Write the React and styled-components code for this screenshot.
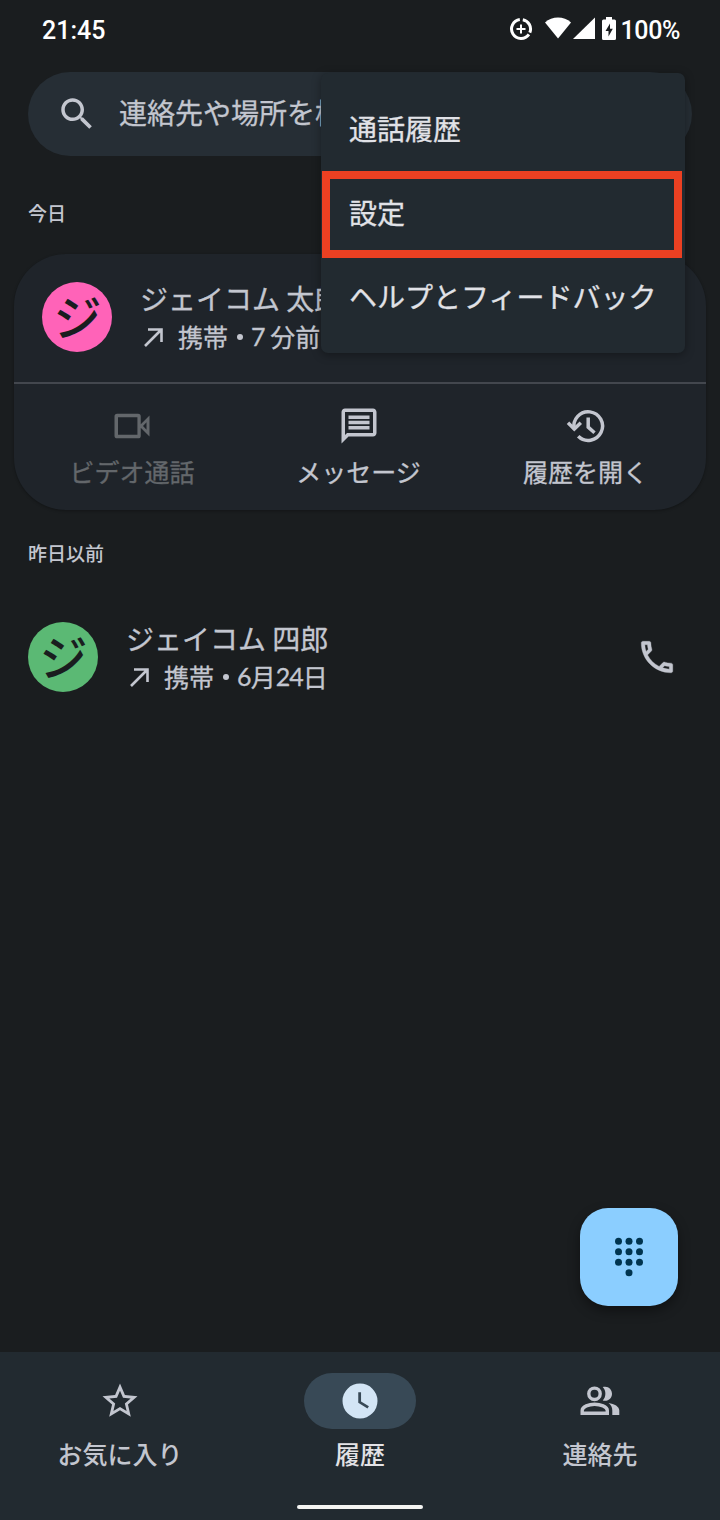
import React from 'react'
import styled, { createGlobalStyle } from 'styled-components'

const GlobalStyle = createGlobalStyle`
  * {
    box-sizing: border-box;
  }
  body {
    margin: 0;
    background: #1a1d1f;
  }
`

const Screen = styled.div`
  position: relative;
  display: flex;
  flex-direction: column;
  width: 720px;
  height: 1520px;
  overflow: hidden;
  background: #1a1d1f;
  color: #c3c6cf;
  font-family: 'Noto Sans CJK JP', 'Noto Sans', sans-serif;
  -webkit-text-stroke: 0.3px currentColor;
  white-space: nowrap;
`

const StatusBar = styled.header`
  display: flex;
  align-items: center;
  justify-content: space-between;
  height: 72px;
  padding: 0 40px 12px 42px;
  color: #fff;
  font-family: Roboto, sans-serif;
  font-size: 25px;
  font-weight: 500;
  -webkit-text-stroke: 0;
`

const StatusIcons = styled.div`
  display: flex;
  align-items: center;
  svg {
    display: block;
    margin-bottom: 2px;
  }
`

const Percent = styled.span`
  letter-spacing: -0.4px;
`

const SearchBar = styled.div`
  display: flex;
  align-items: center;
  gap: 21px;
  height: 84px;
  margin: 0 28px;
  padding: 0 28px;
  border-radius: 42px;
  background: #262e35;
  font-size: 28px;
  line-height: 40px;
  span {
    padding-bottom: 5px;
  }
`

const SectionTitle = styled.h2`
  margin: 0;
  padding-left: 28px;
  height: ${({ $height }) => $height}px;
  line-height: ${({ $line }) => $line}px;
  font-size: 19px;
  font-weight: 500;
  -webkit-text-stroke: 0;
`

const Card = styled.section`
  height: 256px;
  margin: 0 14px;
  border-radius: 52px;
  background: #1f242a;
  box-shadow: 0 1px 3px rgba(0, 0, 0, 0.3);
`

const CallRow = styled.div`
  display: flex;
  align-items: center;
  height: 128px;
  padding: 0 42px 2px 28px;
`

const Avatar = styled.div`
  flex: none;
  width: 70px;
  height: 70px;
  margin-right: 28px;
  padding-left: 1px;
  border-radius: 50%;
  background: ${({ $color }) => $color};
  color: #1a1d1f;
  font-size: 48px;
  font-weight: 500;
  line-height: 66px;
  text-align: center;
  -webkit-text-stroke: 0;
`

const CallInfo = styled.div`
  flex: 1;
`

const Name = styled.div`
  font-size: 28px;
  line-height: 38px;
`

const Detail = styled.div`
  display: flex;
  align-items: center;
  height: 38px;
  font-size: 25px;
  line-height: 36px;
  svg {
    margin: 0 11px 0 1px;
  }
`

const Dot = styled.i`
  width: 6px;
  height: 6px;
  margin: 2px 8px 0 9px;
  border-radius: 50%;
  background: currentColor;
`

const Digits = styled.span`
  font-family: Lato, sans-serif;
  letter-spacing: -0.9px;
`

const Actions = styled.div`
  display: grid;
  grid-template-columns: 236px 217px 237px;
  border-top: 2px solid #43474e;
  padding-top: 21px;
`

const Action = styled.div`
  display: flex;
  flex-direction: column;
  align-items: center;
  font-size: 25px;
  line-height: 36px;
  color: ${({ $disabled }) => ($disabled ? '#63676b' : '#c3c6cf')};
  svg {
    margin-bottom: 6px;
  }
`

const Menu = styled.div`
  position: absolute;
  top: 73px;
  left: 321px;
  width: 364px;
  padding: 14px 0;
  border-radius: 7px;
  background: #222a30;
  box-shadow: 0 2px 10px rgba(0, 0, 0, 0.35);
`

const MenuItem = styled.div`
  position: relative;
  height: 84px;
  padding-left: 28px;
  color: #e1e2e7;
  font-size: 28px;
  line-height: 83px;
`

const Highlight = styled.span`
  position: absolute;
  top: 0;
  left: 1px;
  width: 360px;
  height: 87px;
  border: 8px solid #eb4022;
`

const Fab = styled.button`
  position: absolute;
  top: 1208px;
  right: 42px;
  display: flex;
  align-items: center;
  justify-content: center;
  width: 98px;
  height: 98px;
  padding: 0;
  border: 0;
  border-radius: 28px;
  background: #8bceff;
  box-shadow: 0 5px 12px rgba(0, 0, 0, 0.4);
`

const BottomNav = styled.nav`
  display: grid;
  grid-template-columns: repeat(3, 240px);
  align-content: start;
  height: 168px;
  margin-top: auto;
  padding-top: 21px;
  background: #222a30;
`

const NavItem = styled.div`
  display: flex;
  flex-direction: column;
  align-items: center;
  color: ${({ $active }) => ($active ? '#e3e2e6' : '#c3c6cf')};
  font-size: 25px;
  font-weight: 500;
  line-height: 36px;
  -webkit-text-stroke: 0;
`

const Pill = styled.div`
  display: flex;
  align-items: center;
  justify-content: center;
  width: 112px;
  height: 56px;
  margin-bottom: 6px;
  border-radius: 28px;
  background: ${({ $active }) => ($active ? '#384956' : 'transparent')};
  color: ${({ $active }) => ($active ? '#d3e5f5' : '#c3c6cf')};
`

const HomeBar = styled.div`
  grid-column: 2;
  justify-self: center;
  width: 126px;
  height: 4px;
  margin-top: 34px;
  border-radius: 2px;
  background: #f4f4f2;
`

const Icon = ({ size = 42, children }) => (
  <svg width={size} height={size} viewBox="0 0 24 24" fill="currentColor">
    {children}
  </svg>
)

const OutgoingIcon = () => (
  <svg width="26" height="26" viewBox="0 0 26 26" fill="none" stroke="currentColor" strokeWidth="2.6">
    <path d="M4 23 20 7M7 6.500H20.500V19" />
  </svg>
)

const HistoryIcon = () => (
  <svg width="42" height="42" viewBox="0 0 42 42" fill="none" stroke="currentColor" strokeWidth="3.500">
    <path d="M9.200 24A14.300 14.300 0 1 1 13.200 31.300" />
    <path d="M3 17.800 9.300 24.100 15.800 17.800" />
    <path d="M23.200 12.500V22.100L29.500 27.700" />
  </svg>
)

const DataSaverIcon = () => (
  <svg width="24" height="24" viewBox="0 0 24 24" fill="none" stroke="currentColor">
    <path d="M10.800 2.600A9.500 9.500 0 1 0 19.900 17.400" strokeWidth="3" />
    <path d="M13.800 2.700A9.500 9.500 0 0 1 20.800 15.700" strokeWidth="3" />
    <path d="M12 7.500v9M7.500 12h9" strokeWidth="2" />
  </svg>
)

export default () => {
  return (
    <>
      <GlobalStyle />
      <Screen>
        <StatusBar>
          <span>21:45</span>
          <StatusIcons>
            <DataSaverIcon />
            <svg width="88" height="26" viewBox="0 0 88 26" fill="#fff">
              <path d="M12 6.500C19-.2 31-.2 38 6.500L25 22.500Z" />
              <path d="M62 1.500V23H40Z" />
              <path
                fillRule="evenodd"
                d="M73 1h6v2.500h2.500Q83 3.500 83 5V22.500Q83 24 81.500 24H70.500Q69 24 69 22.500V5Q69 3.500 70.500 3.500H73ZM77 7.500 72.500 15H75.500V20.500L79.800 12.800H77Z"
              />
            </svg>
            <Percent>100%</Percent>
          </StatusIcons>
        </StatusBar>

        <SearchBar>
          <Icon>
            <path d="M15.500 14h-.79l-.28-.27C15.410 12.590 16 11.110 16 9.500 16 5.910 13.090 3 9.500 3S3 5.910 3 9.500 5.910 16 9.500 16c1.610 0 3.090-.59 4.230-1.570l.27.28v.79l5 4.990L20.490 19l-4.990-5zm-6 0C7.010 14 5 11.990 5 9.500S7.010 5 9.500 5 14 7.010 14 9.500 11.990 14 9.500 14z" />
          </Icon>
          <span>連絡先や場所を検</span>
        </SearchBar>

        <SectionTitle $height={98} $line={113}>今日</SectionTitle>
        <Card>
          <CallRow>
            <Avatar $color="#ff63b8">ジ</Avatar>
            <CallInfo>
              <Name>ジェイコム 太郎</Name>
              <Detail>
                <OutgoingIcon />
                携帯<Dot /><Digits>7</Digits>&nbsp;分前
              </Detail>
            </CallInfo>
          </CallRow>
          <Actions>
            <Action $disabled>
              <Icon>
                <path
                  fillRule="evenodd"
                  d="M3.500 5h12a1.500 1.500 0 0 1 1.500 1.500V11l5-5v12l-5-5v4.500a1.500 1.500 0 0 1-1.500 1.500h-12A1.500 1.500 0 0 1 2 17.500v-11A1.500 1.500 0 0 1 3.500 5zm.5 2v10h11.100V7zM20.300 9.800 18.300 12l2 2.200z"
                />
              </Icon>
              ビデオ通話
            </Action>
            <Action>
              <Icon>
                <path d="M4 4h16v12H5.170L4 17.170V4m0-2c-1.100 0-1.990.9-1.990 2L2 22l4-4h14c1.100 0 2-.9 2-2V4c0-1.100-.9-2-2-2H4zm2 10h12v2H6v-2zm0-3h12v2H6V9zm0-3h12v2H6V6z" />
              </Icon>
              メッセージ
            </Action>
            <Action>
              <HistoryIcon />
              履歴を開く
            </Action>
          </Actions>
        </Card>

        <SectionTitle $height={84} $line={85}>昨日以前</SectionTitle>
        <CallRow>
          <Avatar $color="#5bb974">ジ</Avatar>
          <CallInfo>
            <Name>ジェイコム 四郎</Name>
            <Detail>
              <OutgoingIcon />
              携帯<Dot /><Digits>6</Digits>月<Digits>24</Digits>日
            </Detail>
          </CallInfo>
          <Icon>
            <path
              stroke="currentColor"
              strokeWidth="0.2"
              d="M6.540 5c.06.890.21 1.760.45 2.590l-1.200 1.200c-.41-1.200-.67-2.470-.76-3.790h1.510m9.860 12.020c.85.240 1.720.390 2.600.450v1.490c-1.320-.09-2.590-.35-3.800-.75l1.200-1.190M7.500 3H4c-.55 0-1 .450-1 1 0 9.390 7.610 17 17 17 .550 0 1-.45 1-1v-3.490c0-.55-.45-1-1-1-1.240 0-2.450-.2-3.570-.57-.1-.04-.21-.05-.31-.05-.26 0-.51.100-.71.290l-2.200 2.200c-2.830-1.450-5.150-3.760-6.590-6.590l2.200-2.200c.28-.28.360-.67.250-1.020C8.700 6.450 8.500 5.250 8.500 4c0-.55-.45-1-1-1z"
            />
          </Icon>
        </CallRow>

        <BottomNav>
          <NavItem>
            <Pill>
              <Icon>
                <path d="M22 9.240l-7.190-.62L12 2 9.190 8.630 2 9.240l5.460 4.730L5.820 21 12 17.270 18.180 21l-1.630-7.030L22 9.240zM12 15.400l-3.760 2.270 1-4.280-3.320-2.880 4.380-.38L12 6.100l1.710 4.040 4.380.38-3.320 2.880 1 4.280L12 15.400z" />
              </Icon>
            </Pill>
            お気に入り
          </NavItem>
          <NavItem $active>
            <Pill $active>
              <Icon>
                <path
                  fillRule="evenodd"
                  d="M12 2a10 10 0 1 0 0 20 10 10 0 0 0 0-20zm-1 5h1.600v5.300l4.500 2.700-.85 1.350L11 13z"
                />
              </Icon>
            </Pill>
            履歴
          </NavItem>
          <NavItem>
            <Pill>
              <svg width="42" height="42" viewBox="0 0 42 42" fill="none" stroke="currentColor" strokeWidth="3.400">
                <circle cx="15.500" cy="13.800" r="5.700" />
                <path d="M3.200 33.200V30.500C3.200 26.500 10 24.200 15.600 24.200S28.300 26.500 28.300 30.500V33.200Z" />
                <path
                  fill="currentColor"
                  stroke="none"
                  d="M23.700 20.500C27.300 17.200 27.300 10.400 23.700 7.100 29 5.500 33 9.200 33 13.800S29 22 23.700 20.500ZM29.500 22.900C35.500 23.700 40.300 26.500 40.300 30.500V35H33.300V30.500C33.300 27.300 32 24.800 29.500 22.900Z"
                />
              </svg>
            </Pill>
            連絡先
          </NavItem>
          <HomeBar />
        </BottomNav>

        <Fab>
          <svg width="42" height="42" viewBox="0 0 24 24" fill="#00344f">
            {[4, 10, 16].map((y) => [6, 12, 18].map((x) => (
              <circle key={`${x}-${y}`} cx={x} cy={y - 1} r="2" />
            )))}
            <circle cx="12" cy="21" r="2" />
          </svg>
        </Fab>

        <Menu>
          <MenuItem>通話履歴</MenuItem>
          <MenuItem>
            設定
            <Highlight />
          </MenuItem>
          <MenuItem>ヘルプとフィードバック</MenuItem>
        </Menu>
      </Screen>
    </>
  )
}
